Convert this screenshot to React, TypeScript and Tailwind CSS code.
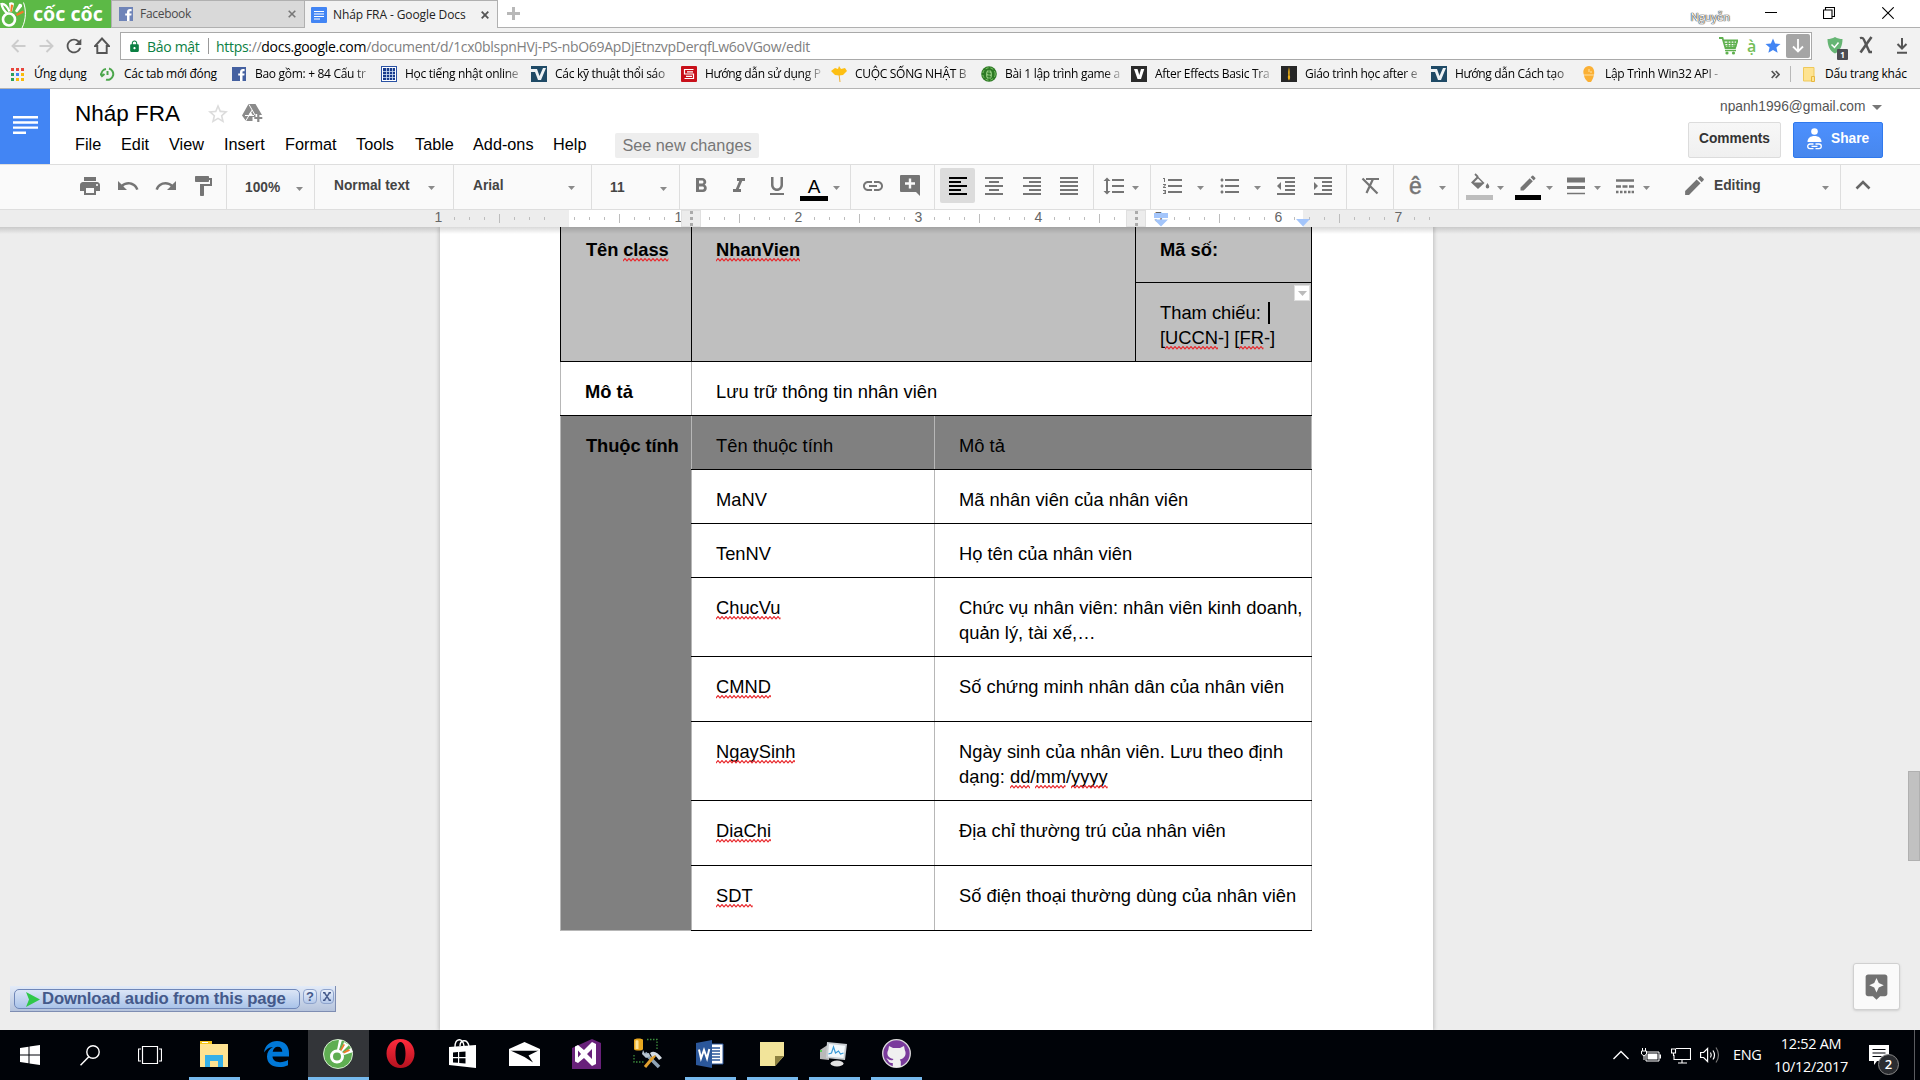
import React from "react";
import {
  MdPrint, MdUndo, MdRedo, MdFormatPaint, MdFormatBold, MdFormatItalic, MdFormatUnderlined, MdInsertLink,
  MdFormatAlignLeft, MdFormatAlignCenter, MdFormatAlignRight, MdFormatAlignJustify, MdFormatLineSpacing,
  MdFormatListNumbered, MdFormatListBulleted, MdFormatIndentDecrease, MdFormatIndentIncrease,
  MdCreate, MdStarBorder, MdStar, MdLock, MdAssistant, MdRefresh,
} from "react-icons/md";

const fade = "[mask-image:linear-gradient(to_right,black_84%,transparent_102%)]";

function Caret({ className = "" }: { className?: string }) {
  return (
    <svg width="7" height="4" viewBox="0 0 7 4" className={"shrink-0 relative top-[2px] " + className}>
      <path d="M0 0h7L3.5 4z" fill="#8a8a8a" />
    </svg>
  );
}

function Squiggle({ children }: { children: React.ReactNode }) {
  return (
    <span className="relative inline-block">
      {children}
      <svg className="absolute left-0 top-[21px] h-[4px] w-full" aria-hidden="true">
        <defs>
          <pattern id="zigzag" width="4" height="4" patternUnits="userSpaceOnUse">
            <path d="M-1 3.9L2 .6L5 3.9M-1 .6" fill="none" stroke="#e8262a" strokeWidth="1.2" />
          </pattern>
        </defs>
        <rect width="100%" height="4" fill="url(#zigzag)" />
      </svg>
    </span>
  );
}

function FacebookIcon({ muted = false }: { muted?: boolean }) {
  return (
    <svg width="14" height="14" viewBox="0 0 14 14" className="shrink-0">
      <rect width="14" height="14" fill={muted ? "#6f84b8" : "#4460a0"} />
      <path d="M8 14V8.6H6.2V6.4H8V5c0-2 1.200-3 3-3h1.600v2.200h-1.200c-.7 0-.9.4-.9 1v1.200h2.100l-.3 2.200h-1.800V14z" fill="#fff" />
    </svg>
  );
}

function CocHand({ className = "" }: { className?: string }) {
  return (
    <svg width="26" height="28" viewBox="0 0 26 28" className={className}>
      <path d="M23.500 2.500C26 9 26.500 19 22 28" fill="none" stroke="#fff" strokeWidth="1" />
      <path d="M8 14C4 11 2 7 1.500 4c3-.5 6 3 8 7.500" fill="none" stroke="#fff" strokeWidth="2.200" />
      <path d="M9 3c2-1.500 5-.5 5 1l-2 8-2-.5z" fill="#fff" />
      <path d="M11 4.500l2.200.4-1.400 7-1.600-.4z" fill="#f37a2a" />
      <path d="M15 11l4-7c2-.5 3.500.5 3 2.500l-5 6z" fill="#fff" />
      <path d="M16 14l7-3.500 1 2-7 3.500z" fill="#f37a2a" />
      <circle cx="9" cy="19.500" r="6" fill="none" stroke="#fff" strokeWidth="2.600" />
    </svg>
  );
}

function TabStrip() {
  return (
    <div className="flex h-7 shrink-0 border-b border-[#b0b0b0] bg-white text-[12px]">
      <div className="flex h-7 w-[111px] shrink-0 items-start bg-[#5cb946]">
        <CocHand />
        <span className="relative ml-[7px] whitespace-nowrap font-['Noto_Sans'] text-[19.500px] leading-[28px] font-bold text-white">
          cốc cốc
        </span>
      </div>
      <div className="flex h-[27px] w-[193px] shrink-0 items-center border-l border-t border-[#b0b0b0] bg-[#d9d9d9] pl-[7px] pr-2">
        <FacebookIcon muted />
        <span className="ml-[7px] flex-1 tracking-[-0.300px] text-[#4a4a4a]">Facebook</span>
        <svg width="8" height="8" viewBox="0 0 8 8"><path d="M.7.7l6.600 6.600M7.300.7L.7 7.300" stroke="#777" strokeWidth="1.600" /></svg>
      </div>
      <div className="flex h-7 w-[194px] shrink-0 items-center border-x border-t border-[#b0b0b0] bg-[#f2f2f2] pl-[6px] pr-2">
        <svg width="16" height="16" viewBox="0 0 16 16">
          <rect width="16" height="16" rx="1" fill="#4285f4" />
          <path d="M3 4.500h10M3 7h10M3 9.500h10M3 12h6" stroke="#fff" strokeWidth="1.200" />
        </svg>
        <span className="ml-[6px] flex-1 whitespace-nowrap tracking-[-0.100px] text-[#222]">Nháp FRA - Google Docs</span>
        <svg width="8" height="8" viewBox="0 0 8 8"><path d="M.7.7l6.600 6.600M7.300.7L.7 7.300" stroke="#555" strokeWidth="1.800" /></svg>
      </div>
      <svg width="13" height="13" viewBox="0 0 13 13" className="ml-[9px] mt-[7px]"><path d="M6.500 0v13M0 6.500h13" stroke="#b8b8b8" strokeWidth="3" /></svg>
      <div className="ml-auto flex">
        <span className="mr-[35px] pt-[8px] text-[11px] leading-[18px] text-white [text-shadow:0_0_1px_#333,0_0_1px_#333,0_0_1px_#333]">Nguyễn</span>
        <svg width="12" height="12" viewBox="0 0 12 12" className="mt-[7px] mr-[46px]"><path d="M0 5.500h12" stroke="#000" /></svg>
        <svg width="12" height="12" viewBox="0 0 12 12" className="mt-[7px] mr-[47px]"><path d="M.5 3h8.500v8.500H.5zM2.500 3V.5h9V9.500H9" fill="none" stroke="#000" strokeWidth="1.100" /></svg>
        <svg width="12" height="12" viewBox="0 0 12 12" className="mt-[7px] mr-[26px]"><path d="M.3.3l11.400 11.400M11.700.3L.3 11.700" stroke="#000" strokeWidth="1.100" /></svg>
      </div>
    </div>
  );
}

function AddressRow() {
  return (
    <div className="flex h-8 shrink-0 items-start pt-[4px]">
      <svg width="15" height="28" viewBox="0 0 15 28" className="ml-[11px]"><path d="M14.500 14H2M7.500 8L1.500 14l6 6" fill="none" stroke="#ccc" strokeWidth="1.900" /></svg>
      <svg width="15" height="28" viewBox="0 0 15 28" className="ml-[13px]"><path d="M.5 14H13M7.500 8l6 6-6 6" fill="none" stroke="#ccc" strokeWidth="1.900" /></svg>
      <MdRefresh className="ml-[9px] mt-[3px] size-[22px] text-[#555]" />
      <svg width="16" height="28" viewBox="0 0 16 28" className="ml-[9px]"><path d="M8 6.500L1 14h2.300v7h9.400v-7H15z" fill="none" stroke="#555" strokeWidth="1.900" /></svg>
      <div className="ml-[10px] flex h-7 w-[1692px] items-center border border-[#a9a9a9] bg-white text-[14px]">
        <MdLock className="ml-[7px] size-[13px] text-[#0b8043]" />
        <span className="ml-[6px] w-[52px] whitespace-nowrap text-[#0b8043] tracking-[-0.300px]">Bảo mật</span>
        <span className="ml-[9px] h-4 w-px bg-[#999]" />
        <span className="ml-[7px] whitespace-nowrap text-[#808080] tracking-[-0.300px]">
          <span className="text-[#0b8043]">https</span>://<span className="text-black">docs.google.com</span>/document/d/1cx0blspnHVj-PS-nbO69ApDjEtnzvpDerqfLw6oVGow/edit
        </span>
        <svg width="19" height="18" viewBox="0 0 19 18" className="ml-auto">
          <path d="M0 1h3.500l3 10h9.500l2.500-7.500H5" fill="none" stroke="#5fb04f" strokeWidth="1.800" />
          <path d="M6 6.300h12M6.500 8.800h11M9 4v7M12 4v7M15 4v7M6 13.500h11" stroke="#5fb04f" strokeWidth="1.300" />
          <circle cx="8" cy="16" r="1.600" fill="#5fb04f" /><circle cx="14.500" cy="16" r="1.600" fill="#5fb04f" />
        </svg>
        <span className="ml-[9px] w-[9px] text-[16px] leading-6 font-semibold text-[#74be58]">ạ̀</span>
        <MdStar className="ml-[8px] size-[18px] text-[#4285f4]" />
        <span className="ml-[4px] mr-px flex size-6 items-center justify-center rounded-[2px] bg-[#a5a5a5]">
          <svg width="12" height="14" viewBox="0 0 12 14"><path d="M6 0v12M1 7.500l5 5 5-5" fill="none" stroke="#fff" strokeWidth="1.800" /></svg>
        </span>
      </div>
      <div className="relative ml-[15px] mt-[5px] w-[16px]">
        <svg width="16" height="17" viewBox="0 0 16 17"><path d="M8 0c2.500 1.500 5 2 7.500 2C15.500 9 13 14 8 16.500 3 14 .5 9 .5 2 3 2 5.500 1.500 8 0z" fill="#66b574" /><path d="M4.500 7.500l3 3 4-5" fill="none" stroke="#fff" strokeWidth="1.500" /></svg>
        <span className="absolute left-[10px] top-[12px] flex h-[11px] w-[11px] items-center justify-center rounded-[1px] bg-[#4c4c52] text-[8px] leading-none font-bold text-white">1</span>
      </div>
      <svg width="14" height="18" viewBox="0 0 14 18" className="ml-[16px] mt-[4px]"><path d="M1 2.200c2.500-1 3-.3 3.800 1.300L10.500 16H13" fill="none" stroke="#555" strokeWidth="2.400" /><path d="M12.500 1L1.500 16.500" fill="none" stroke="#555" strokeWidth="2.600" /></svg>
      <svg width="12" height="16" viewBox="0 0 12 16" className="ml-[23px] mt-[6px]"><path d="M6 0v10M1.500 6L6 10.500 10.500 6M1 14.700h10" fill="none" stroke="#555" strokeWidth="2" /></svg>
    </div>
  );
}

const tileIcons: Record<string, React.ReactNode> = {
  fb: <FacebookIcon />,
  grid: (
    <svg width="16" height="16" viewBox="0 0 16 16"><rect x=".5" y=".5" width="15" height="15" fill="#fff" stroke="#2a52a4" /><path d="M2 2h12v12H2z" fill="#173a8c" /><path d="M5.500 2v12M8.500 2v12M11.500 2v12M2 5.500h12M2 8.500h12M2 11.500h12" stroke="#cfe0f5" strokeWidth=".8" /></svg>
  ),
  v: (
    <svg width="16" height="16" viewBox="0 0 16 16"><rect width="16" height="16" fill="#1f4a66" /><path d="M0 3h6l2.500 7L12 2h3L10 14H7L4 6H0z" fill="#eef3f6" /></svg>
  ),
  s: (
    <svg width="16" height="16" viewBox="0 0 16 16"><rect width="16" height="16" rx="1" fill="#c8101a" /><path d="M12.500 3.500h-9v4.500h9v4.500h-9M6 5.800h6M5 10.300h6" fill="none" stroke="#fff" strokeWidth="1.200" /></svg>
  ),
  flower: (
    <svg width="16" height="16" viewBox="0 0 16 16"><path d="M0 5l4-3 3 1 1-3 2 3 4-1 2 3-4 4-4 .5L4 9z" fill="#fdbf13" /><path d="M8 8l1 8" stroke="#f0b030" /></svg>
  ),
  green: (
    <svg width="16" height="16" viewBox="0 0 16 16"><circle cx="8" cy="8" r="7.800" fill="#2d7a24" /><circle cx="8" cy="8" r="6.200" fill="none" stroke="#7fc46b" strokeDasharray="3 2" /><ellipse cx="8" cy="8.500" rx="3" ry="4.500" fill="#8fc97c" /><path d="M8 4v9M6 7l4 1M6 10l4 1" stroke="#2d7a24" /></svg>
  ),
  vee: (
    <svg width="16" height="16" viewBox="0 0 16 16"><rect width="16" height="16" fill="#2b2b2b" /><path d="M3 3h3.500L8.300 9 10 3h3.300L10 13H6.500z" fill="#fff" /></svg>
  ),
  flame: (
    <svg width="16" height="16" viewBox="0 0 16 16"><rect width="16" height="16" fill="#262626" /><path d="M8 1c1 4 .8 6 .6 8 1 2 .5 4-.6 5.500C6.800 13 6.500 11 7.300 9 7 7 7 5 8 1z" fill="#f0b21a" /></svg>
  ),
  acorn: (
    <svg width="16" height="16" viewBox="0 0 16 16"><path d="M8 0c4 0 6 4 5 9-1 4-2 5-3 7H7C5 14 3 12 3 9 1 4 4 0 8 0z" fill="#fbb034" /><path d="M3 9h10M8 3v3M10 5v2" stroke="#ffe0a0" /></svg>
  ),
};

const bookmarks: [string, string][] = [
  ["fb", "Bao gồm: + 84 Cấu tr"],
  ["grid", "Học tiếng nhật online"],
  ["v", "Các kỹ thuật thổi sáo"],
  ["s", "Hướng dẫn sử dụng P"],
  ["flower", "CUỘC SỐNG NHẬT B"],
  ["green", "Bài 1 lập trình game a"],
  ["vee", "After Effects Basic Tra"],
  ["flame", "Giáo trình học after e"],
  ["v", "Hướng dẫn Cách tạo"],
  ["acorn", "Lập Trình Win32 API -"],
];

const appDots = ["bg-[#e8453c]", "bg-[#e8453c]", "bg-[#e8453c]", "bg-[#2da05a]", "bg-[#4285f4]", "bg-[#f9bb0b]", "bg-[#2da05a]", "bg-[#f9bb0b]", "bg-[#f9bb0b]"];

function BookmarksBar() {
  return (
    <div className="flex h-[29px] shrink-0 items-center border-b border-[#b4b4b4] text-[12px] tracking-[-0.300px] text-black">
      <div className="ml-[11px] grid w-[13px] grid-cols-3 gap-[2px]">
        {appDots.map((c, i) => <span key={i} className={"size-[3px] " + c} />)}
      </div>
      <span className="ml-[10px] w-[66px] whitespace-nowrap">Ứng dụng</span>
      <svg width="15" height="14" viewBox="0 0 15 14"><path d="M1.500 8A5.500 5.500 0 0 1 6 2M9 1.500A5.700 5.700 0 1 1 6 12.600M7.500 4v4M0 6.500L2 9l2.500-2" fill="none" stroke="#4ca64c" strokeWidth="2" /></svg>
      <span className="ml-[9px] w-[107px] whitespace-nowrap">Các tab mới đóng</span>
      {bookmarks.map(([icon, label]) => (
        <div key={label} className="flex w-[150px] shrink-0 items-center">
          <span className="flex w-4 justify-center">{tileIcons[icon]}</span>
          <span className={"ml-[8px] w-[118px] whitespace-nowrap " + fade}>{label}</span>
        </div>
      ))}
      <svg width="9" height="9" viewBox="0 0 9 9" className="ml-[40px]"><path d="M.7 1l3.300 3.500L.7 8M4.700 1L8 4.500 4.700 8" fill="none" stroke="#555" strokeWidth="1.700" /></svg>
      <span className="ml-[10px] h-4 w-px bg-[#b8b8b8]" />
      <svg width="12" height="15" viewBox="0 0 12 15" className="ml-[12px]"><path d="M.5.5h10.500v13.500H.5z" fill="#fee391" stroke="#efc95a" /><path d="M8.500 9.500h3v5h-3z" fill="#fee391" stroke="#e8b83e" /></svg>
      <span className="ml-[10px] whitespace-nowrap tracking-[-0.220px]">Dấu trang khác</span>
    </div>
  );
}

function DocsHeader() {
  return (
    <div className="flex h-[75px] shrink-0 bg-white font-['Liberation_Sans']">
      <div className="w-[50px] bg-[#4285f4] pl-[13px] pt-[27px]">
        <svg width="25" height="19" viewBox="0 0 25 19"><path d="M0 1.300h25M0 6.500h25M0 11.600h25M0 16.800h13" stroke="#fff" strokeWidth="2.400" /></svg>
      </div>
      <div className="flex-1 pl-[25px]">
        <div className="flex h-[41px] items-center pt-[8px]">
          <span className="w-[131px] whitespace-nowrap text-[22.500px] leading-[28px] text-black">Nháp FRA</span>
          <MdStarBorder className="size-[24px] text-[#dcdcdc]" />
          <svg width="22" height="20" viewBox="0 0 22 20" className="ml-[12px]">
            <path d="M6.500 0h7l6.500 11h-3.500v-1h-3v3h-3v4H4L0 11.500z" fill="#8a8a8a" />
            <path d="M7 .5l6 10.500M3.700 17l6.500-11M3 11.500h9" fill="none" stroke="#fff" strokeWidth="1" />
            <path d="M8.500 7.500l2.800 4.500H6z" fill="#fff" />
            <path d="M16.300 10v8M12.300 14h8" stroke="#8a8a8a" strokeWidth="2.200" />
          </svg>
        </div>
        <div className="flex h-[27px] items-center pt-[1px] text-[16.250px] text-black">
          <span className="w-[46px]">File</span>
          <span className="w-[48px]">Edit</span>
          <span className="w-[55px]">View</span>
          <span className="w-[61px]">Insert</span>
          <span className="w-[71px]">Format</span>
          <span className="w-[59px]">Tools</span>
          <span className="w-[58px]">Table</span>
          <span className="w-[80px] whitespace-nowrap">Add-ons</span>
          <span className="w-[62px]">Help</span>
          <span className="mt-[3px] flex h-[25px] w-[144px] items-center justify-center whitespace-nowrap rounded-[2px] bg-[#eee] text-[16.250px] text-[#777]">See new changes</span>
        </div>
      </div>
      <div className="flex w-[232px] flex-col">
        <div className="mt-[8px] flex h-[20px] items-center pl-[32px] text-[13.750px] text-[#555]">
          <span>npanh1996@gmail.com</span>
          <svg width="10" height="5" viewBox="0 0 10 5" className="ml-[7px] mt-px"><path d="M0 0h10L5 5z" fill="#777" /></svg>
        </div>
        <div className="mt-[5px] flex text-[13.750px] font-bold">
          <span className="flex h-9 w-[93px] items-center justify-center rounded-[2px] border border-[#dcdcdc] bg-gradient-to-b from-[#f7f7f7] to-[#f0f0f0] pb-px text-[#333]">Comments</span>
          <span className="ml-[12px] flex h-9 w-[90px] items-center rounded-[2px] border border-[#3079ed] bg-gradient-to-b from-[#4d90fe] to-[#4787ed] pl-[12px] text-white">
            <svg width="17" height="22" viewBox="0 0 17 22" className="-mt-[3px]"><circle cx="8.500" cy="3.500" r="3.300" fill="#fff" /><path d="M1.500 14c0-4 3-6 7-6s7 2 7 6z" fill="#fff" /><path d="M7.500 16H4a2.300 2.300 0 0 0 0 4.600h3.500M9.500 16H13a2.300 2.300 0 0 1 0 4.600H9.500M5.500 18.300h6" fill="none" stroke="#fff" strokeWidth="1.300" /></svg>
            <span className="ml-[8px] pb-px">Share</span>
          </span>
        </div>
      </div>
    </div>
  );
}

const group = "flex h-full shrink-0 items-center border-r border-[#dedede] pb-[3px]";
const icon = "size-6 shrink-0";

function Toolbar() {
  return (
    <div className="flex h-[45px] shrink-0 border-t border-[#dedede] bg-[#fafafa] font-['Liberation_Sans'] text-[13.750px] font-bold text-[#444]">
      <div className={group + " w-[227px] gap-[14px] pl-[78px] text-[#757575]"}>
        <MdPrint className={icon} /><MdUndo className={icon} /><MdRedo className={icon} /><MdFormatPaint className={icon + " -ml-px"} />
      </div>
      <div className={group + " w-[88px] justify-between pl-[18px] pr-[11px] pt-[6px]"}><span>100%</span><Caret className="-mt-[4px]" /></div>
      <div className={group + " w-[139px] justify-between pl-[19px] pr-[18px]"}><span className="pt-px">Normal text</span><Caret /></div>
      <div className={group + " w-[138px] justify-between pl-[19px] pr-[16px]"}><span className="pt-px">Arial</span><Caret /></div>
      <div className={group + " w-[88px] justify-between pl-[18px] pr-[12px] pt-[6px]"}><span>11</span><Caret className="-mt-[4px]" /></div>
      <div className={group + " w-[171px] pl-[9px] text-[#757575]"}>
        <MdFormatBold className={icon} /><MdFormatItalic className={icon + " ml-[14px]"} /><MdFormatUnderlined className={icon + " ml-[14px]"} />
        <span className="relative top-[2px] ml-[11px] flex h-[26px] w-[28px] flex-col items-center border-b-[5px] border-black text-[19px] leading-[23px] font-normal text-black">A</span>
        <Caret className="ml-[5px]" />
      </div>
      <div className={group + " w-[84px] pl-[10px] text-[#757575]"}>
        <MdInsertLink className={icon} />
        <svg width="20" height="21" viewBox="0 0 20 21" className="ml-[15px]"><path d="M1 0h18q1 0 1 1v20l-4-4H1q-1 0-1-1V1q0-1 1-1z" fill="#757575" /><path d="M10 3.500v10M5 8.500h10" stroke="#fafafa" strokeWidth="2.400" /></svg>
      </div>
      <div className={group + " w-[159px] text-[#757575]"}>
        <span className="ml-[5px] flex h-[35px] w-[35px] items-center justify-center rounded-[2px] bg-[#dcdcdc] text-black"><MdFormatAlignLeft className={icon} /></span>
        <MdFormatAlignCenter className={icon + " ml-[7px]"} /><MdFormatAlignRight className={icon + " ml-[14px]"} /><MdFormatAlignJustify className={icon + " ml-[13px]"} />
      </div>
      <div className={group + " w-[57px] pl-[8px] text-[#757575]"}><MdFormatLineSpacing className={icon} /><Caret className="ml-[6px]" /></div>
      <div className={group + " w-[196px] pl-[10px] text-[#757575]"}>
        <MdFormatListNumbered className={icon} /><Caret className="ml-[12px]" />
        <MdFormatListBulleted className={icon + " ml-[14px]"} /><Caret className="ml-[12px]" />
        <MdFormatIndentDecrease className={icon + " ml-[13px]"} /><MdFormatIndentIncrease className={icon + " ml-[13px]"} />
      </div>
      <div className={group + " w-[47px] justify-center text-[#757575]"}>
        <svg width="18" height="18" viewBox="0 0 18 18"><path d="M1.500 1.500l15 15M5 2h13M12 2L5.500 16" fill="none" stroke="#757575" strokeWidth="2.200" /></svg>
      </div>
      <div className={group + " w-[65px] pl-[15px] text-[#757575]"}>
        <span className="w-[13px] text-[23px] leading-[24px] font-normal [-webkit-text-stroke:0.5px_#757575]">ê</span><Caret className="ml-[17px]" />
      </div>
      <div className={group + " w-[382px] pl-[7px] text-[#757575]"}>
        <span className="relative top-px flex h-[27px] w-[27px] flex-col items-center border-b-[5px] border-[#bdbdbd]">
          <svg width="20" height="18" viewBox="0 0 20 18" className="shrink-0"><path d="M5 1l3 3" stroke="#757575" strokeWidth="1.800" /><path d="M7.500 3l7 7-6.500 6-7-6.500z" fill="#757575" /><path d="M8 5.500l4 4H4z" fill="#fafafa" /><path d="M17.500 10c1 1.700 1.800 2.600 1.800 3.800a1.800 1.800 0 0 1-3.600 0c0-1.200.8-2.100 1.800-3.800z" fill="#757575" /></svg>
        </span>
        <Caret className="ml-[4px]" />
        <span className="relative top-px ml-[11px] flex h-[27px] w-[26px] flex-col items-center border-b-[5px] border-black"><MdCreate className="size-[20px] shrink-0" /></span>
        <Caret className="ml-[5px]" />
        <svg width="24" height="24" viewBox="0 0 24 24" className="ml-[11px]"><path d="M3 6h18" stroke="#757575" strokeWidth="5" /><path d="M3 13.500h18" stroke="#757575" strokeWidth="3" /><path d="M3 19.500h18" stroke="#757575" strokeWidth="1.500" /></svg>
        <Caret className="ml-[6px]" />
        <svg width="24" height="24" viewBox="0 0 24 24" className="ml-[12px]"><path d="M3 6.500h18M3 12.500h5M9.500 12.500h5M16 12.500h5M3 18h2.500M7 18h2.500M11 18h2.500M15 18h2.500M18.600 18H21" stroke="#757575" strokeWidth="2.700" /></svg>
        <Caret className="ml-[6px]" />
        <MdCreate className="ml-[32px] size-[25px]" />
        <span className="ml-[7px] pt-px text-[#444]">Editing</span>
        <Caret className="ml-auto mr-[11px]" />
      </div>
      <svg width="16" height="10" viewBox="0 0 16 10" className="ml-[14px] mt-[15px]"><path d="M1.500 8.500L8 2l6.500 6.500" fill="none" stroke="#666" strokeWidth="2.600" /></svg>
    </div>
  );
}

const ticks = Array.from({ length: 67 }, (_, k) => k);

function Ruler() {
  return (
    <div className="relative h-[18px] shrink-0 border-t border-[#dedede] bg-[#ededed] font-['Liberation_Sans'] text-[14px] text-[#666]">
      <div className="flex h-full">
        <div className="w-[432px]" />
        <div className="relative flex h-full w-[1005px] bg-[linear-gradient(to_right,transparent_137px,white_137px,white_871px,transparent_871px)]">
          {ticks.map((k) => (
            <span key={k} className="flex w-[15px] shrink-0 items-center justify-center">
              {k % 8 === 0 ? (
                k !== 8 && <span className="pb-[2px] pr-[2px] leading-[15px]">{Math.abs(k / 8 - 1)}</span>
              ) : (
                <span className={k % 8 === 4 ? "h-[9px] w-px bg-[#bdbdbd]" : "h-[3px] w-px bg-[#bdbdbd]"} />
              )}
            </span>
          ))}
        </div>
      </div>
      {["left-[681px]", "left-[1126px]"].map((p) => (
        <span key={p} className={"absolute top-0 flex h-[17px] w-[20px] justify-center border border-[#e0e0e0] bg-[#ececec] " + p}>
          <span className="h-full border-l-[3px] border-dotted border-[#aaa]" />
        </span>
      ))}
      <svg width="14" height="14" viewBox="0 0 14 14" className="absolute left-[1154px] top-[3px]"><path d="M0 0h14v5H0zM0 6.500h14L7 13.500z" fill="#a3c5fb" /></svg>
      <svg width="14" height="8" viewBox="0 0 14 8" className="absolute left-[1296px] top-[9px]"><path d="M0 0h14L7 7.500z" fill="#a3c5fb" /></svg>
    </div>
  );
}

const attributes: { name: string; wavy: boolean; text: React.ReactNode; h: string }[] = [
  { name: "MaNV", wavy: false, text: "Mã nhân viên của nhân viên", h: "h-[54px]" },
  { name: "TenNV", wavy: false, text: "Họ tên của nhân viên", h: "h-[54px]" },
  { name: "ChucVu", wavy: true, text: <>Chức vụ nhân viên: nhân viên kinh doanh,<br />quản lý, tài xế,…</>, h: "h-[79px]" },
  { name: "CMND", wavy: true, text: "Số chứng minh nhân dân của nhân viên", h: "h-[65px]" },
  {
    name: "NgaySinh", wavy: true, h: "h-[79px]",
    text: <>Ngày sinh của nhân viên. Lưu theo định<br />dạng: <Squiggle>dd</Squiggle>/<Squiggle>mm</Squiggle>/<Squiggle>yyyy</Squiggle></>,
  },
  { name: "DiaChi", wavy: true, text: "Địa chỉ thường trú của nhân viên", h: "h-[65px]" },
  { name: "SDT", wavy: true, text: "Số điện thoại thường dùng của nhân viên", h: "h-[65px]" },
];

function DocTable() {
  return (
    <div className="ml-[120px] w-[752px] font-['Liberation_Sans'] text-[18.333px] leading-[25px] whitespace-nowrap text-black">
      <div className="flex h-[135px] border-b border-black bg-[#bfbfbf]">
        <div className="w-[131px] border-l border-black pl-[25px] pt-[10px] font-bold tracking-[-0.100px]">Tên <Squiggle>class</Squiggle></div>
        <div className="w-[444px] border-l border-black pl-[24px] pt-[10px] font-bold"><Squiggle>NhanVien</Squiggle></div>
        <div className="w-[177px] border-x border-black">
          <div className="h-[56px] border-b border-black pl-[24px] pt-[10px] font-bold">Mã số:</div>
          <div className="relative pl-[24px] pt-[17px]">
            Tham chiếu: <span className="absolute left-[132px] top-[19px] h-[22px] w-[2px] bg-black" />
            <br />
            [<Squiggle>UCCN</Squiggle>-] [<Squiggle>FR</Squiggle>-]
            <span className="absolute right-[1px] top-[2px] flex size-4 items-center justify-center border border-[#ddd] bg-white">
              <svg width="9" height="5" viewBox="0 0 9 5"><path d="M0 0h9L4.500 5z" fill="#bbb" /></svg>
            </span>
          </div>
        </div>
      </div>
      <div className="flex h-[54px] border-b border-black">
        <div className="w-[131px] border-l border-[#b7b7b7] pl-[24px] pt-[17px] font-bold">Mô tả</div>
        <div className="flex-1 border-x border-[#b7b7b7] pl-[24px] pt-[17px]">Lưu trữ thông tin nhân viên</div>
      </div>
      <div className="flex">
        <div className="w-[131px] border-b border-l border-[#b7b7b7] bg-[#808080] pl-[25px] pt-[17px] font-bold tracking-[-0.100px]">Thuộc tính</div>
        <div className="flex-1">
          <div className="flex h-[54px] border-b border-black bg-[#808080]">
            <div className="w-[243px] border-l border-[#b7b7b7] pl-[24px] pt-[17px]">Tên thuộc tính</div>
            <div className="flex-1 border-x border-[#b7b7b7] pl-[24px] pt-[17px]">Mô tả</div>
          </div>
          {attributes.map((a) => (
            <div key={a.name} className={"flex border-b border-black " + a.h}>
              <div className="w-[243px] border-l border-[#b7b7b7] pl-[24px] pt-[17px]">{a.wavy ? <Squiggle>{a.name}</Squiggle> : a.name}</div>
              <div className="flex-1 border-x border-[#b7b7b7] pl-[24px] pt-[17px]">{a.text}</div>
            </div>
          ))}
        </div>
      </div>
    </div>
  );
}

function DocCanvas() {
  return (
    <div className="relative h-[803px] shrink-0 overflow-hidden bg-[#ededed]">
      <div className="ml-[440px] h-full w-[993px] bg-white shadow-[0_0_4px_1px_rgba(0,0,0,0.200)]"><DocTable /></div>
      <div className="absolute inset-x-0 top-0 h-[7px] bg-gradient-to-b from-black/15 to-transparent" />
      <div className="absolute left-[10px] top-[759px] flex h-[26px] w-[326px] items-start border-b border-r border-[#7e8db2] bg-gradient-to-b from-[#e3ebf8] to-[#b5c3dc] pl-[4px] pt-[3px] font-['Liberation_Sans'] text-[#44598a]">
        <span className="flex h-[20px] w-[286px] items-center rounded-[5px] border border-[#6f87b8] bg-gradient-to-b from-[#dbe5f6] to-[#a9c3e9] pl-[10px]">
          <svg width="15" height="15" viewBox="0 0 15 15"><path d="M1 0l14 7.500L1 15l3-7.500z" fill="#2fc84a" /></svg>
          <span className="ml-[2px] whitespace-nowrap text-[16.700px] leading-[18px] font-bold tracking-[-0.170px]">Download audio from this page</span>
        </span>
        <span className="ml-[3px] flex h-[15px] w-[14px] items-center justify-center rounded-[4px] border border-[#8ea3cc] bg-gradient-to-b from-[#e9f0fb] to-[#b5c9ea] text-[13px] font-bold">?</span>
        <span className="ml-[3px] flex h-[15px] w-[14px] items-center justify-center rounded-[4px] border border-[#8ea3cc] bg-gradient-to-b from-[#e9f0fb] to-[#b5c9ea]">
          <svg width="8" height="9" viewBox="0 0 8 9"><path d="M1 0l6 9M7 0L1 9M0 .7h2.500M5.500.7H8M0 8.300h2.500M5.500 8.300H8" stroke="#44598a" strokeWidth="1.400" /></svg>
        </span>
      </div>
      <div className="absolute right-[20px] top-[736px] flex size-[47px] items-center justify-center rounded-[3px] border border-[#d0d0d0] bg-[#fafafa] shadow-sm"><MdAssistant className="size-[29px] text-[#717171]" /></div>
      <div className="absolute right-0 top-[544px] h-[90px] w-[12px] border border-[#b0b0b0] bg-[#c1c1c1]" />
    </div>
  );
}

const apps: { id: string; open?: boolean; active?: boolean; art: React.ReactNode }[] = [
  { id: "explorer", open: true, art: <svg width="28" height="28" viewBox="0 0 28 28"><path d="M0 1h12v3h16v23H0z" fill="#fee391" /><path d="M0 1h12v3H0z" fill="#f5c518" /><path d="M2 2h6v1H2z" fill="#fff" /><path d="M5 27V15h18v12h-5v-6h-8v6z" fill="#35b0e8" /></svg> },
  { id: "edge", art: <svg width="25" height="26" viewBox="0 0 25 26"><path d="M0 11.500C1 4 6.500 0 13 0c8 0 12 5.500 12 12v3.500H8.500c.3 4 3.500 5.700 7.500 5.700 3 0 5.700-.8 8-2.200v5.200C21.500 25.500 18.500 26 15 26 8 26 3 22 3 15.500 3 11.500 5 8 9 6 4.500 6.300 2 8.500 0 11.500zM8.700 10.700h9.600c0-3-1.600-5-4.500-5-2.800 0-4.600 2-5.100 5z" fill="#0078d7" fillRule="evenodd" /></svg> },
  { id: "coccoc", active: true, art: <svg width="30" height="30" viewBox="0 0 30 30"><circle cx="15" cy="15" r="14.500" fill="#5fae52" stroke="#d5ecd0" /><path d="M16 1l3 0-3 10-2 0zM21 3l5 3-7 7-1-1zM28 9l2 4-9 3-1-2z" fill="#fff" /><path d="M20.500 5l1.500.7-3.500 6-1.500-.7zM26 10l1 1.800-6 2.700-.8-1.500z" fill="#f37a2a" /><circle cx="14" cy="17.500" r="5.500" fill="#5fae52" stroke="#fff" strokeWidth="3" /></svg> },
  { id: "opera", art: <svg width="29" height="29" viewBox="0 0 29 29"><defs><linearGradient id="op" x2="0" y2="1"><stop offset="0" stopColor="#ff2b3c" /><stop offset="1" stopColor="#b3121f" /></linearGradient></defs><path d="M14.500 0C6.500 0 .5 6 .5 14.500S6.500 29 14.500 29s14-6 14-14.500S22.500 0 14.500 0zM14.500 3c3.300 0 5 5 5 11.500s-1.700 11.500-5 11.500-5-5-5-11.500S11.200 3 14.500 3z" fillRule="evenodd" fill="url(#op)" /></svg> },
  { id: "store", art: <svg width="27" height="30" viewBox="0 0 27 30"><path d="M0 8l27-2v23L0 26z" fill="#fff" /><path d="M6 8c0-9 8-10 9-1M11 7c0-6 7-8 9 0" fill="none" stroke="#fff" strokeWidth="1.400" /><path d="M4 13.500l5-.4v5H4zM10.200 13l6.300-.5V18h-6.300zM4 19.200h5v4.600l-5-.4zM10.200 19.200h6.300v5.300l-6.300-.5z" fill="#000308" /></svg> },
  { id: "mail", art: <svg width="31" height="24" viewBox="0 0 31 24"><path d="M0 7L15.500 0 31 7v17H0z" fill="#fff" /><path d="M1.500 8.500L15.500 15 24 20.500 19.500 13.500 29.500 8.500z" fill="#000308" /><path d="M1.500 8.500h28L15.500 2z" fill="#fff" /></svg> },
  { id: "vs", art: <svg width="29" height="30" viewBox="0 0 29 30"><path d="M0 9l20-9 9 4v26H0z" fill="#68217a" /><path d="M20 3l4 2v20l-4 2-8-8-6 5-3-1.500v-15L6 6l6 5zM20 10l-5 5 5 5zM6 11.500v7l3-3.500z" fill="#fff" fillRule="evenodd" /></svg> },
  { id: "tools", art: <svg width="30" height="31" viewBox="0 0 30 31"><path d="M1 2c0-2 9-2 9 0v9c0 2-9 2-9 0z" fill="#e9a820" /><path d="M2.500 3c0-1 3-1 3 0v8h-3z" fill="#fbe29a" /><path d="M14 1.500h10v10M1 17v7h10" fill="none" stroke="#3d8f3d" strokeWidth="1.300" strokeDasharray="1.500 1.500" /><path d="M12 15l14 14" stroke="#8fa3b5" strokeWidth="3.500" /><path d="M22 17L12 29" stroke="#e0a030" strokeWidth="3" /><path d="M17 15c4-3 8 0 12 5l-3 2-4-5-3 2z" fill="#d5dde4" /><path d="M10 12l2 4 4-1 1 3-4 2-4-4z" fill="#b8c5d0" /></svg> },
  { id: "word", open: true, art: <svg width="28" height="28" viewBox="0 0 28 28"><path d="M14 4h13v20H14z" fill="#fff" stroke="#2b579a" /><path d="M16 8h8M16 11h8M16 14h8M16 17h8M16 20h8" stroke="#2b579a" strokeWidth="1.400" /><path d="M0 3l16-3v28L0 25z" fill="#2b579a" /><path d="M3 9.500l2 9 3-8.500 3 8.500 2.300-9.500" fill="none" stroke="#fff" strokeWidth="2" /></svg> },
  { id: "notes", open: true, art: <svg width="24" height="24" viewBox="0 0 24 24"><path d="M0 0h24v14l-9 10H0z" fill="#f2e49a" /><path d="M15 24V14h9z" fill="#8c8040" /></svg> },
  { id: "monitor", open: true, art: <svg width="28" height="26" viewBox="0 0 28 26"><path d="M0 9l9-6v16l-9-1z" fill="#b9b9b9" /><path d="M7 1l20 2-2 16-19-2z" fill="#c9ced2" /><path d="M9 3l16 1.800-1.500 12.200L8 15.500z" fill="#f4f9fc" /><path d="M8.500 13l3-1 2-6 2 6 3-2 2 3 3-1" fill="none" stroke="#3a9bd8" strokeWidth="1.200" /><ellipse cx="17" cy="22.500" rx="6.500" ry="3" fill="#e2e2e2" /><path d="M0 10h2" stroke="#3ecf3e" strokeWidth="1.500" /></svg> },
  { id: "github", open: true, art: <svg width="29" height="29" viewBox="0 0 29 29"><circle cx="14.500" cy="14.500" r="13.800" fill="#7a3b9c" stroke="#ddd" strokeWidth="1.300" /><path d="M7 7l4 2h7l4-2 .8 4c2 4 .2 8.500-5 9.500l1 2v5.500h-8V24c-3 .5-4-1-5-3l-1.500-1.500c2-.5 3 2.500 6.500 1.500l.7-1C6 19 4 15 6.300 11z" fill="#f0f0f0" /></svg> },
];

function Taskbar() {
  return (
    <div className="flex h-[50px] shrink-0 bg-[#000308] text-white">
      <div className="flex w-[183px] items-center">
        <span className="flex w-[60px] justify-center"><svg width="20" height="20" viewBox="0 0 20 20"><path d="M0 3l8.500-1.200v7.700H0zM9.500 1.600L20 0v9.500H9.500zM0 10.500h8.500v7.700L0 17zM9.500 10.500H20V20L9.500 18.400z" fill="#fff" /></svg></span>
        <span className="flex w-[60px] justify-center"><svg width="20" height="21" viewBox="0 0 20 21"><circle cx="13" cy="7" r="6.200" fill="none" stroke="#fff" strokeWidth="1.400" /><path d="M8.800 11.800L.5 20.300" stroke="#fff" strokeWidth="1.500" /></svg></span>
        <span className="flex w-[60px] justify-center"><svg width="24" height="18" viewBox="0 0 24 18"><path d="M4.500.5h15v17h-15zM3 3H.5v12H3M21 3h2.500v12H21" fill="none" stroke="#fff" strokeWidth="1.200" /></svg></span>
      </div>
      {apps.map((a) => (
        <div key={a.id} className="flex w-[62px] shrink-0 justify-center">
          <div className={"flex h-full items-center justify-center " + (a.active ? "w-[61px] border-b-[3px] border-[#76b9ed] bg-[#333539]" : a.open ? "w-[51px] border-b-[3px] border-[#76b9ed]" : "w-[51px] border-b-[3px] border-transparent")}>
            {a.art}
          </div>
        </div>
      ))}
      <div className="ml-auto flex items-center">
        <svg width="16" height="10" viewBox="0 0 16 10"><path d="M.5 9L8 1.500 15.500 9" fill="none" stroke="#fff" strokeWidth="1.400" /></svg>
        <svg width="20" height="15" viewBox="0 0 20 15" className="ml-[12px]"><path d="M5 4h13v9H5z" fill="none" stroke="#fff" /><path d="M6.500 5.500h10v6h-10zM18.500 6.500H20v4h-1.500z" fill="#fff" /><path d="M.5 3h5v3L3 8 .5 6zM1.500 0v3M4.500 0v3M3 8v4" stroke="#fff" fill="#000308" /></svg>
        <svg width="20" height="17" viewBox="0 0 20 17" className="ml-[10px]"><path d="M5 1.500h14.500v11H3V8M11 12.500v3M7 16h9M.5 2h4v4h-4zM2.500 6v3" fill="none" stroke="#fff" strokeWidth="1.100" /></svg>
        <svg width="21" height="18" viewBox="0 0 21 18" className="ml-[9px]"><path d="M.6 6.500h3l4-4v13l-4-4h-3zM10.500 6.500q1.500 2.500 0 5M13 4.500q3 4.500 0 9" fill="none" stroke="#fff" strokeWidth="1.200" /><path d="M16 1.500q5 7.500 0 15" fill="none" stroke="#777" strokeWidth="1.200" /></svg>
        <span className="ml-[12px] w-[29px] text-[14.500px] tracking-[-0.400px]">ENG</span>
        <span className="ml-[9px] mr-[3px] flex w-[80px] flex-col items-center whitespace-nowrap text-[14.500px] leading-[23px] tracking-[-0.300px]"><span>12:52 AM</span><span>10/12/2017</span></span>
        <div className="relative ml-[15px] mr-[25px] w-[20px]">
          <svg width="20" height="20" viewBox="0 0 20 20"><path d="M0 0h20v16H8l-3 4v-4H0z" fill="#fff" /><path d="M3.500 4.500h13M3.500 8h13M3.500 11.500h9" stroke="#000308" strokeWidth="1.200" /></svg>
          <span className="absolute left-[9px] top-[9px] flex size-[21px] items-center justify-center rounded-full border border-[#888] bg-[#2a2c30] text-[13px] font-semibold">2</span>
        </div>
        <span className="mr-[5px] h-full w-px bg-[#5a5c60]" />
      </div>
    </div>
  );
}

export default function App() {
  return (
    <div className="flex h-[1080px] w-[1920px] flex-col overflow-hidden bg-[#f2f2f2] font-['Open_Sans','Noto_Sans',sans-serif]">
      <TabStrip />
      <AddressRow />
      <BookmarksBar />
      <DocsHeader />
      <Toolbar />
      <Ruler />
      <DocCanvas />
      <Taskbar />
    </div>
  );
}
